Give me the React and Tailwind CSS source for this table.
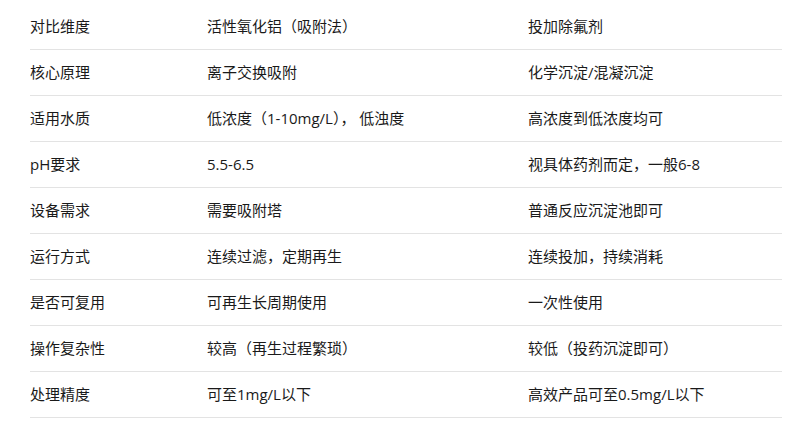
const ROWS = [
  ['对比维度', '活性氧化铝（吸附法）', '投加除氟剂'],
  ['核心原理', '离子交换吸附', '化学沉淀/混凝沉淀'],
  ['适用水质', '低浓度（1-10mg/L）， 低浊度', '高浓度到低浓度均可'],
  ['pH要求', '5.5-6.5', '视具体药剂而定，一般6-8'],
  ['设备需求', '需要吸附塔', '普通反应沉淀池即可'],
  ['运行方式', '连续过滤，定期再生', '连续投加，持续消耗'],
  ['是否可复用', '可再生长周期使用', '一次性使用'],
  ['操作复杂性', '较高（再生过程繁琐）', '较低（投药沉淀即可）'],
  ['处理精度', '可至1mg/L以下', '高效产品可至0.5mg/L以下'],
];

export default function App() {
  return (
    <div
      className="w-[787px] h-[435px] bg-white pt-[4px] pl-[30px] text-[15px] text-[#1a1a1a]"
      style={{ fontFamily: '"Open Sans", "Noto Sans CJK SC", sans-serif' }}
    >
      <div className="w-[752px]">
        {ROWS.map((r, i) => (
          <div
            key={i}
            className="grid grid-cols-[177px_321px_254px] h-[46px] items-center border-b border-[#e3e3e3]"
          >
            {r.map((c, j) => (
              <div key={j} className="whitespace-pre">{c}</div>
            ))}
          </div>
        ))}
      </div>
    </div>
  );
}
